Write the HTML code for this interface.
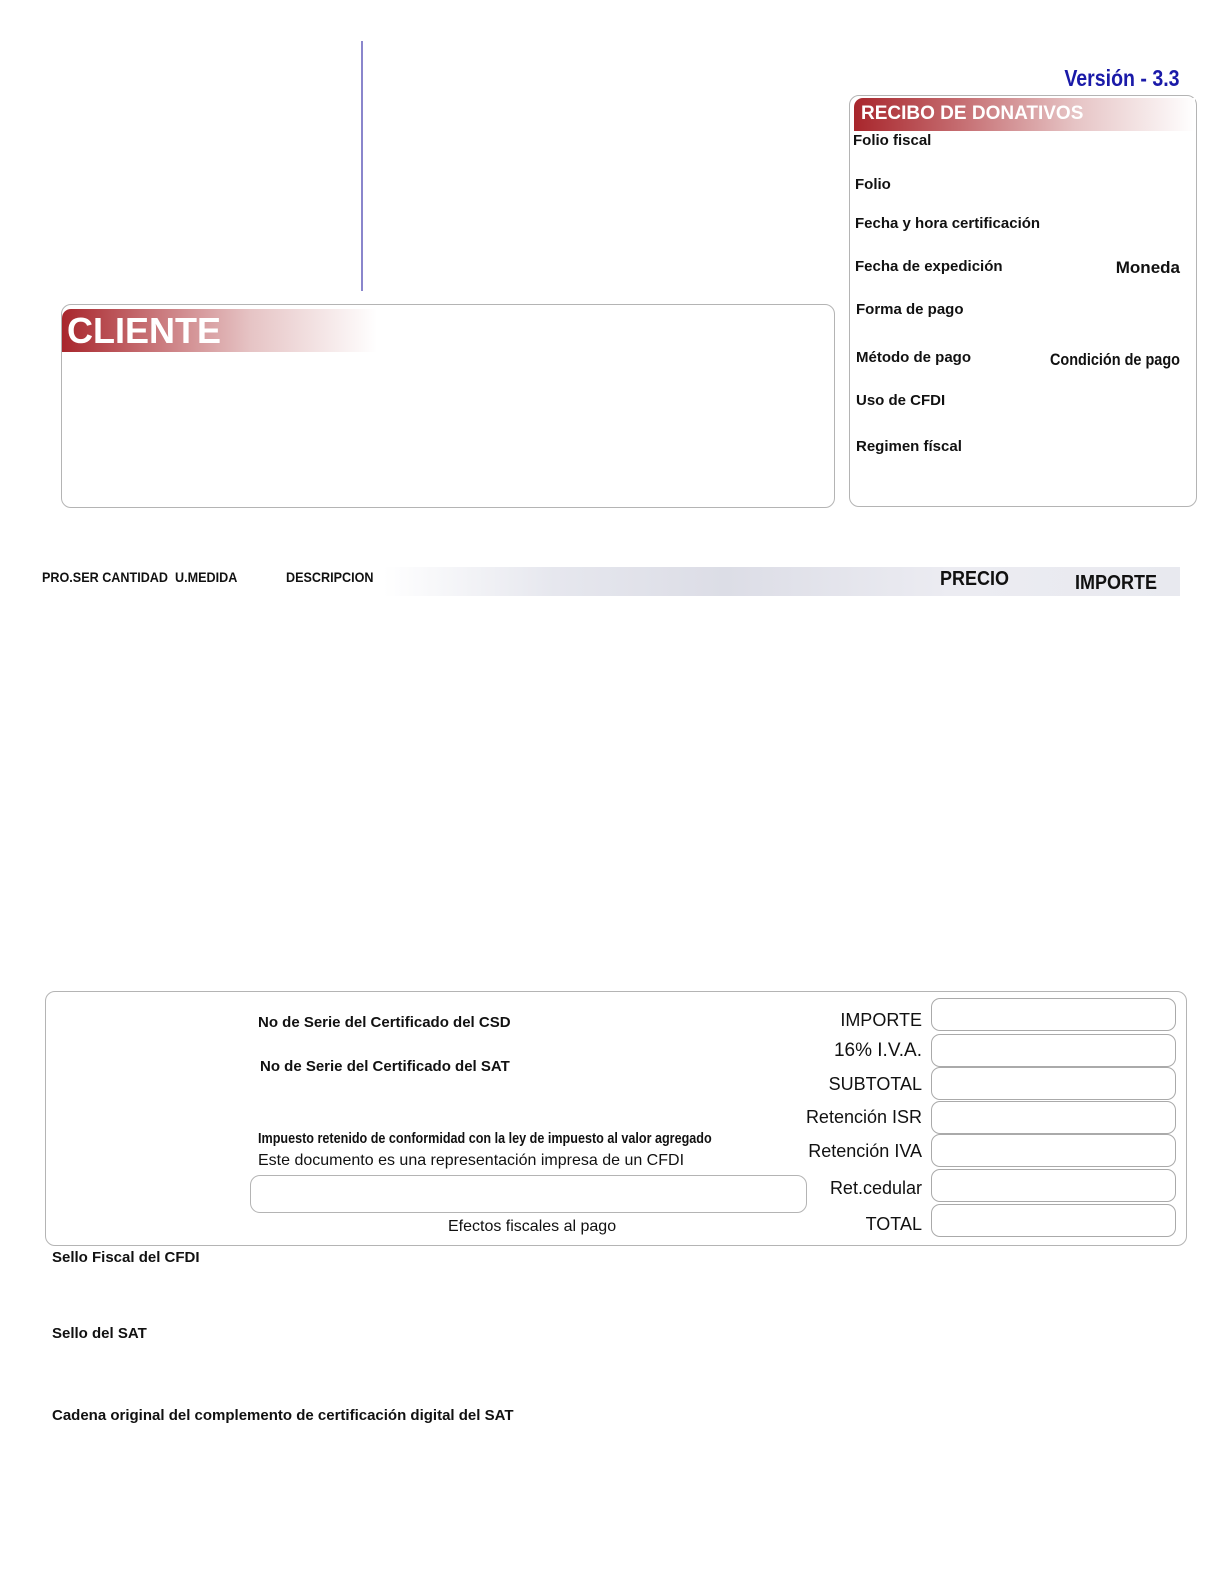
<!DOCTYPE html>
<html><head><meta charset="utf-8"><style>
body{margin:0;width:1224px;height:1584px;background:#fff;position:relative;font-family:"Liberation Sans",sans-serif;color:#111;overflow:hidden}
.a{position:absolute;white-space:nowrap;line-height:1}
.b{font-weight:bold}
.box{position:absolute;border:1px solid #b4b4b4;border-radius:10px}
.tb{position:absolute;left:931px;width:243px;height:31px;border:1px solid #aaa;border-radius:9px}
.lbl{position:absolute;right:302px;font-size:18px;line-height:1;white-space:nowrap}
</style></head><body>
<div class="a" style="left:361px;top:41px;width:2px;height:250px;background:#8a86cc"></div>
<div class="a b" style="right:44px;top:67px;font-size:23px;color:#1a1aa8;transform:scaleX(0.85);transform-origin:right">Versión - 3.3</div>

<div class="box" style="left:849px;top:95px;width:346px;height:410px"></div>
<div class="a" style="left:854px;top:98px;width:341px;height:33px;border-radius:9px 0 0 0;background:linear-gradient(90deg,#a8262c 0%,#c46a6e 30%,#e6c4c5 65%,#fff 100%)"></div>
<div class="a b" style="left:861px;top:104px;font-size:19px;color:#fff">RECIBO DE DONATIVOS</div>
<div class="a b" style="left:853px;top:133px;font-size:15px">Folio fiscal</div>
<div class="a b" style="left:855px;top:177px;font-size:15px">Folio</div>
<div class="a b" style="left:855px;top:216px;font-size:15px">Fecha y hora certificación</div>
<div class="a b" style="left:855px;top:259px;font-size:15px">Fecha de expedición</div>
<div class="a b" style="right:44px;top:259px;font-size:17px">Moneda</div>
<div class="a b" style="left:856px;top:302px;font-size:15px">Forma de pago</div>
<div class="a b" style="left:856px;top:350px;font-size:15px">Método de pago</div>
<div class="a b" style="right:44px;top:351px;font-size:17px;transform:scaleX(0.85);transform-origin:right">Condición de pago</div>
<div class="a b" style="left:856px;top:393px;font-size:15px">Uso de CFDI</div>
<div class="a b" style="left:856px;top:439px;font-size:15px">Regimen físcal</div>

<div class="box" style="left:61px;top:304px;width:772px;height:202px"></div>
<div class="a" style="left:62px;top:309px;width:315px;height:43px;border-radius:9px 0 0 0;background:linear-gradient(90deg,#a8262c 0%,#c46a6e 25%,#e6c4c5 60%,#fff 100%)"></div>
<div class="a b" style="left:67px;top:313px;font-size:36px;color:#fff">CLIENTE</div>

<div class="a" style="left:42px;top:567px;width:1138px;height:29px;background:linear-gradient(90deg,#fff 0%,#fff 30%,#e6e7ee 45%,#dcdde6 60%,#ececf2 80%,#e8e9ef 100%)"></div>
<div class="a b" style="left:42px;top:570px;font-size:14px;transform:scaleX(0.9);transform-origin:left">PRO.SER CANTIDAD &nbsp;U.MEDIDA</div>
<div class="a b" style="left:286px;top:570px;font-size:14px;transform:scaleX(0.9);transform-origin:left">DESCRIPCION</div>
<div class="a b" style="left:940px;top:569px;font-size:20px;transform:scaleX(0.9);transform-origin:left">PRECIO</div>
<div class="a b" style="left:1075px;top:573px;font-size:20px;transform:scaleX(0.9);transform-origin:left">IMPORTE</div>

<div class="box" style="left:45px;top:991px;width:1140px;height:253px"></div>
<div class="a b" style="left:258px;top:1015px;font-size:15px">No de Serie del Certificado del CSD</div>
<div class="a b" style="left:260px;top:1059px;font-size:15px">No de Serie del Certificado del SAT</div>
<div class="a b" style="left:258px;top:1131px;font-size:15px;transform:scaleX(0.84);transform-origin:left">Impuesto retenido de conformidad con la ley de impuesto al valor agregado</div>
<div class="a" style="left:258px;top:1153px;font-size:16px">Este documento es una representación impresa de un CFDI</div>
<div class="box" style="left:250px;top:1175px;width:555px;height:36px"></div>
<div class="a" style="left:448px;top:1219px;font-size:16px">Efectos fiscales al pago</div>

<div class="tb" style="top:998px"></div><div class="lbl" style="top:1011px">IMPORTE</div>
<div class="tb" style="top:1034px"></div><div class="lbl" style="top:1041px;font-size:19px">16% I.V.A.</div>
<div class="tb" style="top:1067px"></div><div class="lbl" style="top:1075px">SUBTOTAL</div>
<div class="tb" style="top:1101px"></div><div class="lbl" style="top:1108px">Retención ISR</div>
<div class="tb" style="top:1134px"></div><div class="lbl" style="top:1142px">Retención IVA</div>
<div class="tb" style="top:1169px"></div><div class="lbl" style="top:1179px">Ret.cedular</div>
<div class="tb" style="top:1204px"></div><div class="lbl" style="top:1215px">TOTAL</div>

<div class="a b" style="left:52px;top:1250px;font-size:15px">Sello Fiscal del CFDI</div>
<div class="a b" style="left:52px;top:1326px;font-size:15px">Sello del SAT</div>
<div class="a b" style="left:52px;top:1408px;font-size:15px">Cadena original del complemento de certificación digital del SAT</div>
</body></html>
